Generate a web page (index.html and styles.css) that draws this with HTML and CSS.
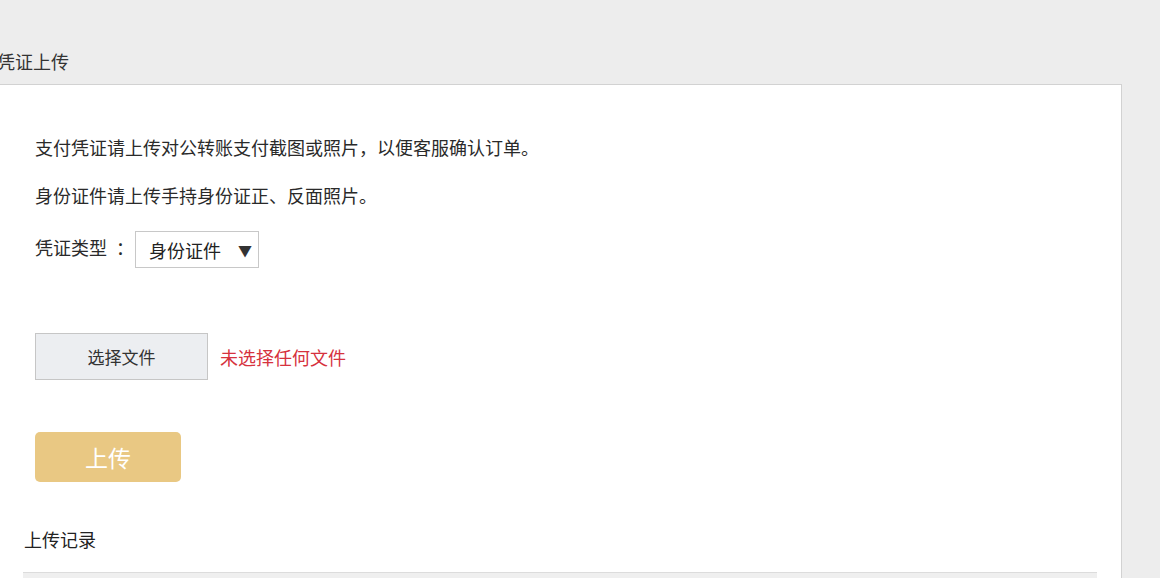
FILE: index.html
```html
<!DOCTYPE html>
<html lang="zh-CN">
<head>
<meta charset="utf-8">
<title>凭证上传</title>
<link rel="stylesheet" href="styles.css">
</head>
<body>
<div class="page">
  <h2 class="page-title">凭证上传</h2>
  <div class="panel">
    <div class="content">
      <p class="tip">支付凭证请上传对公转账支付截图或照片，以便客服确认订单。</p>
      <p class="tip">身份证件请上传手持身份证正、反面照片。</p>
      <div class="type-row">
        <span class="type-label">凭证类型<span class="colon">：</span></span>
        <div class="select"><span>身份证件</span><span class="arrow">▼</span></div>
      </div>
      <div class="file-row">
        <span class="file-btn">选择文件</span>
        <span class="file-name">未选择任何文件</span>
      </div>
      <div class="upload-row">
        <span class="upload-btn">上传</span>
      </div>
    </div>
    <div class="records">
      <h3 class="records-title">上传记录</h3>
      <div class="table-head"></div>
    </div>
  </div>
</div>
</body>
</html>
```

FILE: styles.css
```css
html, body {
  margin: 0;
  padding: 0;
  background: #ededed;
  font-family: "Microsoft YaHei", "Noto Sans CJK SC", "Noto Sans", sans-serif;
  color: #2a2a2a;
  overflow: hidden;
}
.page {
  padding-top: 49px;
  margin-left: -1px;
  width: 1123px;
}
.page-title {
  margin: 0 0 11px -2px;
  font-size: 18px;
  font-weight: normal;
  line-height: 24px;
  color: #333;
}
.panel {
  background: #fff;
  border: 1px solid #d2d2d2;
  border-bottom: 0;
  height: 500px;
  box-sizing: border-box;
}
.content {
  padding: 50px 0 0 35px;
}
.tip {
  margin: 0 0 24px;
  font-size: 18px;
  line-height: 24px;
}
.type-row {
  display: flex;
  align-items: flex-start;
}
.type-label {
  font-size: 18px;
  line-height: 24px;
  margin-top: 4px;
  width: 100px;
  display: flex;
}
.colon {
  margin-left: 9px;
}
.select {
  width: 124px;
  height: 37px;
  box-sizing: border-box;
  border: 1px solid #c8c8c8;
  display: flex;
  align-items: center;
  justify-content: space-between;
  padding: 0 6px 0 13px;
  font-size: 18px;
  color: #222;
}
.arrow {
  font-size: 14px;
  color: #333;
}
.file-row {
  margin-top: 65px;
  display: flex;
  align-items: center;
}
.file-btn {
  width: 173px;
  height: 47px;
  box-sizing: border-box;
  border: 1px solid #c6c6c6;
  background: #eceef1;
  display: flex;
  align-items: center;
  justify-content: center;
  font-size: 17px;
  color: #333;
}
.file-name {
  margin-left: 12px;
  font-size: 18px;
  color: #d6323e;
}
.upload-row {
  margin-top: 52px;
}
.upload-btn {
  width: 146px;
  height: 50px;
  border-radius: 5px;
  background: #e9c883;
  color: #fff;
  font-size: 23px;
  display: flex;
  align-items: center;
  justify-content: center;
}
.records {
  padding: 45px 24px 0 23px;
}
.records-title {
  margin: 0 0 21px 1px;
  font-size: 18px;
  font-weight: normal;
  line-height: 24px;
  color: #222;
}
.table-head {
  height: 10px;
  background: #efefef;
  border-top: 1px solid #dcdcdc;
}
```
